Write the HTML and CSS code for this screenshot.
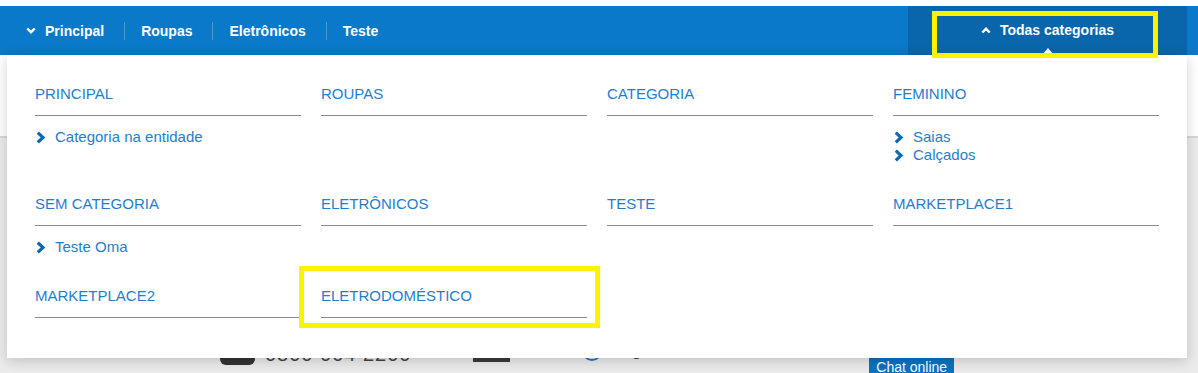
FILE: index.html
```html
<!DOCTYPE html>
<html lang="pt-BR">
<head>
    <meta charset="UTF-8">
    <meta name="viewport" content="width=device-width, initial-scale=1.0">
    <title>Todas categorias</title>
    <link rel="stylesheet" href="styles.css">
</head>
<body>
    <div class="topline"></div>

    <header class="menu-bar">
        <div class="wrap">
            <ul class="menu">
                <li>
                    <svg class="ico-down" width="10" height="7" viewBox="0 0 10 7"><path d="M1.3 1.5 L5 5.2 L8.7 1.5" /></svg>
                    Principal
                </li>
                <li>Roupas</li>
                <li>Eletrônicos</li>
                <li>Teste</li>
            </ul>
            <div class="all-cats">
                <svg class="ico-up" width="10" height="7" viewBox="0 0 10 7"><path d="M1.3 5.5 L5 1.8 L8.7 5.5" /></svg>
                Todas categorias
                <span class="caret"></span>
                <span class="highlight hl-all"></span>
            </div>
        </div>

        <!-- dropdown with every category -->
        <div class="dropdown">
            <div class="cat-grid">
                <div class="cat">
                    <a class="cat-title">Principal</a>
                    <ul class="cat-list">
                        <li><svg class="ico-right" width="10" height="13" viewBox="0 0 10 13"><path d="M1.8 1.6 L7 6.5 L1.8 11.4" /></svg>Categoria na entidade</li>
                    </ul>
                </div>
                <div class="cat">
                    <a class="cat-title">Roupas</a>
                </div>
                <div class="cat">
                    <a class="cat-title">Categoria</a>
                </div>
                <div class="cat">
                    <a class="cat-title">Feminino</a>
                    <ul class="cat-list">
                        <li><svg class="ico-right" width="10" height="13" viewBox="0 0 10 13"><path d="M1.8 1.6 L7 6.5 L1.8 11.4" /></svg>Saias</li>
                        <li><svg class="ico-right" width="10" height="13" viewBox="0 0 10 13"><path d="M1.8 1.6 L7 6.5 L1.8 11.4" /></svg>Calçados</li>
                    </ul>
                </div>

                <div class="cat">
                    <a class="cat-title">Sem categoria</a>
                    <ul class="cat-list">
                        <li><svg class="ico-right" width="10" height="13" viewBox="0 0 10 13"><path d="M1.8 1.6 L7 6.5 L1.8 11.4" /></svg>Teste Oma</li>
                    </ul>
                </div>
                <div class="cat">
                    <a class="cat-title">Eletrônicos</a>
                </div>
                <div class="cat">
                    <a class="cat-title">Teste</a>
                </div>
                <div class="cat">
                    <a class="cat-title">Marketplace1</a>
                </div>

                <div class="cat">
                    <a class="cat-title">Marketplace2</a>
                </div>
                <div class="cat">
                    <a class="cat-title">Eletrodoméstico</a>
                    <span class="highlight hl-cat"></span>
                </div>
            </div>
        </div>
    </header>

    <div class="page">
        <div class="banner"></div>
        <div class="contact">
            <div class="wrap contact-row">
                <span class="phone-ico"></span>
                <span class="phone">0800 004 2200</span>
                <span class="mail-ico"></span>
                <span class="clock-ico"></span>
                <span class="hours">Seg a Sex, das 8h</span>
                <span class="dot"></span>
                <button class="chat-btn">Chat online</button>
            </div>
        </div>
    </div>
</body>
</html>
```

FILE: styles.css
```css
* {
    margin: 0;
    padding: 0;
    box-sizing: border-box;
}

body {
    font-family: "Liberation Sans", Arial, sans-serif;
    background-color: #ffffff;
    overflow: hidden;
}

ul {
    list-style: none;
}

.wrap {
    width: 1180px;
    margin-left: 7px;
}

.topline {
    height: 6px;
    background-color: #ffffff;
}

/* top menu */
.menu-bar {
    position: relative;
    background-color: #0a79c9;
    height: 49px;
    z-index: 10;
}

.menu-bar .wrap {
    display: flex;
    justify-content: space-between;
    height: 49px;
}

.menu {
    display: flex;
    align-items: center;
}

.menu li {
    display: flex;
    align-items: center;
    color: #ffffff;
    font-weight: bold;
    font-size: 14px;
    padding: 0 20px 0 16px;
    height: 18px;
    border-left: 1px solid #4a98d6;
}

.menu li:first-child {
    border-left: none;
    padding-left: 19px;
}

.ico-down,
.ico-up {
    fill: none;
    stroke: #ffffff;
    stroke-width: 2.4;
    margin-right: 9px;
}

.all-cats {
    position: relative;
    width: 279px;
    display: flex;
    align-items: center;
    justify-content: center;
    background-color: #0966aa;
    color: #ffffff;
    font-weight: bold;
    font-size: 14px;
    padding-bottom: 1px;
}

.caret {
    position: absolute;
    bottom: 0;
    left: 134px;
    border-left: 6px solid transparent;
    border-right: 6px solid transparent;
    border-bottom: 7px solid #ffffff;
}

.highlight {
    position: absolute;
    border: 5px solid #fff200;
    z-index: 5;
}

.hl-all {
    left: 24px;
    top: 5px;
    width: 226px;
    height: 47px;
}

/* dropdown */
.dropdown {
    position: absolute;
    top: 49px;
    left: 7px;
    width: 1180px;
    background-color: #ffffff;
    padding: 29px 28px 40px;
    box-shadow: 0 3px 12px rgba(0, 0, 0, 0.18);
}

.cat-grid {
    display: grid;
    grid-template-columns: repeat(4, 266px);
    column-gap: 20px;
    row-gap: 30px;
}

.cat {
    position: relative;
}

.cat-title {
    display: block;
    font-size: 15px;
    line-height: 20px;
    text-transform: uppercase;
    color: #1f7ecd;
    padding-bottom: 11px;
    border-bottom: 1px solid #8c8c8c;
}

.cat-list {
    margin-top: 12px;
}

.cat-list li {
    display: flex;
    align-items: center;
    font-size: 15px;
    line-height: 18px;
    color: #1f7ecd;
}

.ico-right {
    fill: none;
    stroke: #0c68b6;
    stroke-width: 3.2;
    margin-left: 1px;
    margin-right: 9px;
}

.hl-cat {
    left: -22px;
    top: -20px;
    width: 301px;
    height: 62px;
}

/* page behind the dropdown */
.banner {
    height: 83px;
    border-bottom: 2px solid #d6d6d6;
}

.contact {
    background-color: #ebebeb;
    height: 240px;
    padding-top: 200px;
}

.contact-row {
    display: flex;
    align-items: flex-end;
    height: 30px;
}

.phone-ico {
    width: 35px;
    height: 24px;
    margin-left: 213px;
    margin-bottom: 3px;
    background-color: #333333;
    border-radius: 6px;
}

.phone {
    margin-left: 10px;
    margin-bottom: 2px;
    font-size: 20px;
    color: #444444;
    letter-spacing: 1px;
}

.mail-ico {
    width: 37px;
    height: 22px;
    margin-left: 62px;
    margin-bottom: 6px;
    background-color: #3a3a3a;
}

.clock-ico {
    width: 20px;
    height: 20px;
    margin-left: 72px;
    margin-bottom: 7px;
    border: 2px solid #1a7bcb;
    border-radius: 50%;
}

.hours {
    margin-left: 10px;
    margin-bottom: 8px;
    font-size: 16px;
    color: #444444;
}

.dot {
    width: 3px;
    height: 3px;
    margin-left: 90px;
    margin-bottom: 13px;
    background-color: #444444;
}

.chat-btn {
    width: 85px;
    height: 40px;
    margin-left: 33px;
    margin-bottom: -10px;
    padding-top: 18px;
    background-color: #0a72c0;
    color: #ffffff;
    border: none;
    font-family: "Liberation Sans", Arial, sans-serif;
    font-size: 14px;
}
```
